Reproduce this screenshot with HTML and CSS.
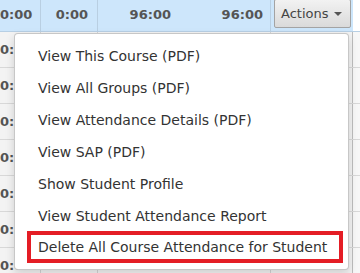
FILE: index.html
```html
<!DOCTYPE html>
<html lang="en">
<head>
    <meta charset="UTF-8">
    <meta name="viewport" content="width=device-width, initial-scale=1.0">
    <title>Attendance Actions</title>
    <link rel="stylesheet" href="styles.css">
</head>
<body>
    <div class="grid">
        <!-- Selected row -->
        <div class="row selected">
            <div class="cell c1">0:00</div>
            <div class="cell c2">0:00</div>
            <div class="cell c3">96:00</div>
            <div class="cell c4">96:00</div>
            <div class="cell c5">
                <button class="actions-btn">Actions <span class="caret"></span></button>
            </div>
            <div class="cell c6"></div>
        </div>
        <div class="row"><div class="cell c1">0:00</div><div class="cell c2"></div><div class="cell c3"></div><div class="cell c4"></div><div class="cell c5"></div><div class="cell c6"></div></div>
        <div class="row"><div class="cell c1">0:00</div><div class="cell c2"></div><div class="cell c3"></div><div class="cell c4"></div><div class="cell c5"></div><div class="cell c6"></div></div>
        <div class="row"><div class="cell c1">0:00</div><div class="cell c2"></div><div class="cell c3"></div><div class="cell c4"></div><div class="cell c5"></div><div class="cell c6"></div></div>
        <div class="row"><div class="cell c1">0:00</div><div class="cell c2"></div><div class="cell c3"></div><div class="cell c4"></div><div class="cell c5"></div><div class="cell c6"></div></div>
        <div class="row"><div class="cell c1">0:00</div><div class="cell c2"></div><div class="cell c3"></div><div class="cell c4"></div><div class="cell c5"></div><div class="cell c6"></div></div>
        <div class="row"><div class="cell c1">0:00</div><div class="cell c2"></div><div class="cell c3"></div><div class="cell c4"></div><div class="cell c5"></div><div class="cell c6"></div></div>
        <div class="row"><div class="cell c1">0:00</div><div class="cell c2"></div><div class="cell c3"></div><div class="cell c4"></div><div class="cell c5"></div><div class="cell c6"></div></div>

        <!-- Dropdown menu -->
        <ul class="dropdown-menu">
            <li><a href="#">View This Course (PDF)</a></li>
            <li><a href="#">View All Groups (PDF)</a></li>
            <li><a href="#">View Attendance Details (PDF)</a></li>
            <li><a href="#">View SAP (PDF)</a></li>
            <li><a href="#">Show Student Profile</a></li>
            <li><a href="#">View Student Attendance Report</a></li>
            <li class="flagged"><a href="#">Delete All Course Attendance for Student</a></li>
        </ul>
    </div>
</body>
</html>
```

FILE: styles.css
```css
body {
    font-family: "DejaVu Sans", Verdana, sans-serif;
    margin: 0;
    padding: 0;
    width: 360px;
    height: 273px;
    overflow: hidden;
    background-color: #fff;
}
.grid {
    position: relative;
}
.row {
    display: flex;
    height: 35px;
    border-bottom: 1px solid #d8d8d8;
    background-color: #f3f3f3;
}
.row.selected {
    height: 31px;
    border-bottom: 1px solid #b7cfe4;
    background-color: #cde6fb;
}
.cell {
    box-sizing: border-box;
    border-right: 1px solid #d4d4d4;
    font-size: 13px;
    font-weight: bold;
    color: #555;
    text-align: right;
    line-height: 35px;
    flex-shrink: 0;
}
.selected .cell {
    line-height: 29px;
    border-right-color: #b9cfe2;
}
.c1 {
    width: 41px;
    padding-right: 8px;
}
.c2 {
    width: 57px;
    padding-right: 9px;
}
.c3 {
    width: 82px;
    padding-right: 9px;
    border-right: none;
}
.c4 {
    width: 91px;
    padding-right: 7px;
}
.c5 {
    width: 82px;
    padding: 0 0 0 3px;
    text-align: left;
    border-right: 1px solid #bdbdbd;
}
.c6 {
    flex: 1;
    border-right: none;
    background-color: #f7f7f7;
}
.selected .c5 {
    border-right: none;
}
.selected .c6 {
    background-color: #fff;
}
.actions-btn {
    font-family: "DejaVu Sans", Verdana, sans-serif;
    font-size: 13px;
    color: #444;
    height: 29px;
    width: 77px;
    margin-top: -1px;
    padding: 0 6px;
    border: 1px solid #a3a3a3;
    border-radius: 2px;
    background: linear-gradient(#f2f2f2, #dadada);
    text-align: left;
    display: flex;
    align-items: center;
    gap: 5px;
}
.caret {
    display: inline-block;
    width: 0;
    height: 0;
    border-left: 4px solid transparent;
    border-right: 4px solid transparent;
    border-top: 4px solid #555;
}
.dropdown-menu {
    position: absolute;
    left: 14px;
    top: 33px;
    width: 335px;
    box-sizing: border-box;
    margin: 0;
    padding: 6px 0;
    list-style: none;
    background-color: #fff;
    border: 1px solid rgba(0, 0, 0, 0.22);
    border-radius: 4px;
    box-shadow: 0 4px 10px rgba(0, 0, 0, 0.15);
}
.dropdown-menu li a {
    display: block;
    padding: 0 0 0 23px;
    height: 32px;
    line-height: 32px;
    font-size: 14px;
    color: #333;
    text-decoration: none;
    white-space: nowrap;
}
.dropdown-menu li.flagged a {
    margin: -1px 5px 0 12px;
    padding-left: 7px;
    height: 24px;
    line-height: 24px;
    border: 4px solid #e41d25;
}
```
